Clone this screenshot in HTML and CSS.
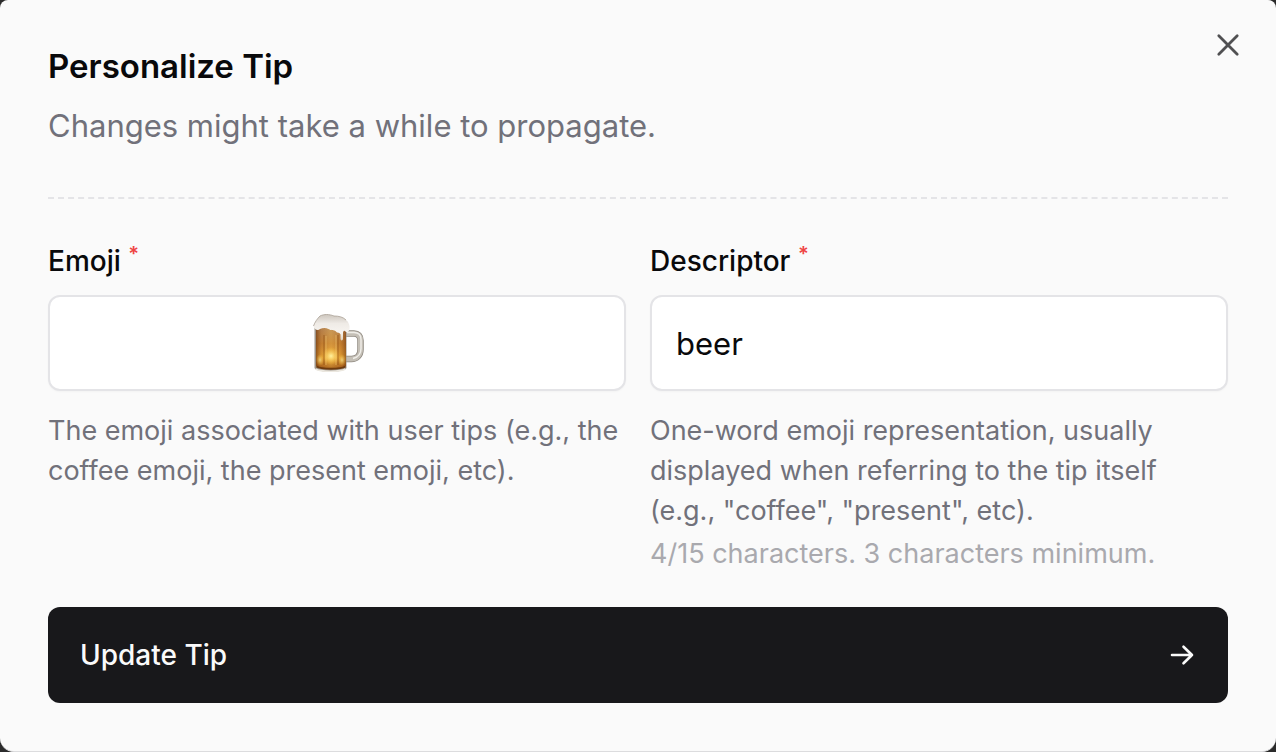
FILE: index.html
```html
<!DOCTYPE html>
<html lang="en">

<head>
    <meta charset="UTF-8">
    <meta name="viewport" content="width=device-width, initial-scale=1">
    <title>Personalize Tip</title>
    <link rel="stylesheet" href="styles.css">
</head>

<body>
    <main class="dialog" role="dialog" aria-labelledby="dialogTitle">
        <button type="button" class="close" aria-label="Close">
            <svg width="32" height="32" viewBox="0 0 32 32" fill="none" stroke="currentColor" stroke-width="2.8" stroke-linecap="round">
                <path d="M6.8 6.8 25.2 25.2M25.2 6.8 6.8 25.2"/>
            </svg>
        </button>

        <header class="dialog-header">
            <h1 id="dialogTitle">Personalize Tip</h1>
            <p>Changes might take a while to propagate.</p>
        </header>

        <form class="tip-form">
            <div class="fields">
                <div class="form-group">
                    <label for="emoji">Emoji <span class="required">*</span></label>
                    <button type="button" id="emoji" class="control emoji-picker">
                        <!-- Beer mug -->
                        <svg width="60" height="64" viewBox="0 0 60 64" aria-hidden="true">
                            <defs>
                                <linearGradient id="beer" x1="0" y1="0" x2="0" y2="1">
                                    <stop offset="0" stop-color="#b98a5c"/>
                                    <stop offset="0.4" stop-color="#c98435"/>
                                    <stop offset="0.75" stop-color="#eda93a"/>
                                    <stop offset="1" stop-color="#a45c1c"/>
                                </linearGradient>
                                <linearGradient id="side" x1="0" y1="0" x2="1" y2="0">
                                    <stop offset="0" stop-color="#6b3610" stop-opacity="0.7"/>
                                    <stop offset="0.18" stop-color="#9c5716" stop-opacity="0.2"/>
                                    <stop offset="0.5" stop-color="#ffd558" stop-opacity="0.2"/>
                                    <stop offset="0.82" stop-color="#9c5716" stop-opacity="0.2"/>
                                    <stop offset="1" stop-color="#6b3610" stop-opacity="0.6"/>
                                </linearGradient>
                                <radialGradient id="glow">
                                    <stop offset="0" stop-color="#fff1a0"/>
                                    <stop offset="1" stop-color="#ffc83e" stop-opacity="0"/>
                                </radialGradient>
                                <linearGradient id="foam" x1="0" y1="0" x2="0" y2="1">
                                    <stop offset="0" stop-color="#cdc6be"/>
                                    <stop offset="0.35" stop-color="#efebe6"/>
                                    <stop offset="0.7" stop-color="#f7f4f0"/>
                                    <stop offset="1" stop-color="#ddd0bf"/>
                                </linearGradient>
                            </defs>
                            <path d="M39 22.5h8c4 0 6.5 2.500 6.500 7v9c0 6-4 9.500-9 9.500h-6" fill="none" stroke="#8f8980" stroke-width="6.500"/>
                            <path d="M39 22.5h8c4 0 6.500 2.500 6.500 7v9c0 6-4 9.500-9 9.500h-6" fill="none" stroke="#c4bfb6" stroke-width="5"/>
                            <path d="M40 21.500h7c4.500 0 7 2.500 7 7v9c0 6-4 9-8 10" fill="none" stroke="#efede8" stroke-width="1.500"/>
                            <path d="M7.500 16h32v41c-2 5-30 5-32 0z" fill="#9d958b"/>
                            <path d="M9 16h30v39c-3 3-27 3-30 0z" fill="url(#beer)"/>
                            <path d="M9 16h30v39c-3 3-27 3-30 0z" fill="url(#side)"/>
                            <ellipse cx="24" cy="45" rx="9" ry="9" fill="url(#glow)"/>
                            <ellipse cx="13" cy="49" rx="4" ry="6" fill="url(#glow)" opacity="0.7"/>
                            <ellipse cx="35" cy="49" rx="4" ry="6" fill="url(#glow)" opacity="0.7"/>
                            <path d="M17 24v30M31 24v30" stroke="#86480f" stroke-width="1.2" opacity="0.5"/>
                            <path d="M19 25v29M29 24v30" stroke="#ffe08a" stroke-width="0.8" opacity="0.5"/>
                            <path d="M9.500 55.500c5 3 24 3 29 0" fill="none" stroke="#6e3b0e" stroke-width="2"/>
                            <path d="M8.500 58c5 3 25 3 30 0" fill="none" stroke="#ece8e0" stroke-width="1.500"/>
                            <path d="M6.500 15C8 11 10 8 13 5c4-2 9-2 14 0 5 0 9 1 12 4 3 2 4 6 3.500 9-.5 3-3 4-4 2.500-1-1.500-2-1-2.500 1v6c0 2.500-2.500 2.500-2.500 0v-4c-1-2.500-3-1-4-2.500-3-3-5-1-8-3-3-1.500-6-1-8.500 0-2 2-6 .5-6.500-3z" fill="url(#foam)"/>
                            <path d="M6.500 15C8 11 10 8 13 5c4-2 9-2 14 0 5 0 9 1 12 4" fill="none" stroke="#a99f94" stroke-width="0.8"/>
                        </svg>
                    </button>
                    <p class="hint">The emoji associated with user tips (e.g., the coffee emoji, the present emoji, etc).</p>
                </div>

                <div class="form-group">
                    <label for="descriptor">Descriptor <span class="required">*</span></label>
                    <input type="text" id="descriptor" name="descriptor" class="control" value="beer" minlength="3" maxlength="15" required>
                    <p class="hint">One-word emoji representation, usually displayed when referring to the tip itself (e.g., "coffee", "present", etc).</p>
                    <p class="counter">4/15 characters. 3 characters minimum.</p>
                </div>
            </div>

            <button type="submit" class="submit">
                <span>Update Tip</span>
                <svg width="28" height="28" viewBox="0 0 28 28" fill="none" stroke="currentColor" stroke-width="2.6" stroke-linecap="round" stroke-linejoin="round">
                    <path d="M4 14h20M15.500 5.700l8.500 8.300-8.500 8.300"/>
                </svg>
            </button>
        </form>
    </main>
</body>

</html>
```
FILE: styles.css
```css
* {
    box-sizing: border-box;
}

body {
    margin: 0;
    background-color: #2b2b2b;
    color: #09090b;
    font-family: Inter, "Liberation Sans", sans-serif;
    font-size: 28px;
    line-height: 40px;
}

h1,
p {
    margin: 0;
}

button,
input {
    font: inherit;
    color: inherit;
}

button {
    cursor: pointer;
}

svg {
    display: block;
}

.dialog {
    position: relative;
    padding: 48px;
    background-color: #fafafa;
    border-bottom: 1px solid #dcdcde;
    border-radius: 8px 8px 14px 14px;
}

.close {
    position: absolute;
    top: 29px;
    right: 32px;
    padding: 0;
    border: none;
    background: none;
    color: #505052;
}

.dialog-header {
    padding-bottom: 47px;
    border-bottom: 2px dashed #e4e4e7;
}

.dialog-header h1 {
    margin-bottom: 18px;
    font-size: 33px;
    font-weight: 600;
    line-height: 36px;
}

.dialog-header p {
    color: #71717a;
    font-size: 31px;
    line-height: 48px;
}

.tip-form {
    padding-top: 42px;
}

.fields {
    display: grid;
    grid-template-columns: 1fr 1fr;
    gap: 24px;
}

.form-group label {
    display: block;
    margin-bottom: 14px;
    font-weight: 500;
}

.required {
    color: #ef4444;
    font-size: 20px;
    font-weight: 600;
    line-height: 20px;
    vertical-align: 10px;
}

.control {
    display: block;
    width: 100%;
    height: 96px;
    padding: 0 24px;
    border: 2px solid #e4e4e7;
    border-radius: 12px;
    background-color: #fff;
    font-size: 31px;
    box-shadow: 0 1px 2px rgba(0, 0, 0, 0.03);
}

.emoji-picker {
    display: flex;
    align-items: center;
    justify-content: center;
}

.hint,
.counter {
    font-size: 27px;
}

.hint {
    margin-top: 20px;
    color: #71717a;
}

.counter {
    margin-top: 3px;
    color: #a9a9ae;
}

.submit {
    display: flex;
    align-items: center;
    justify-content: space-between;
    width: 100%;
    height: 96px;
    margin-top: 33px;
    padding: 0 32px;
    border: none;
    border-radius: 12px;
    background-color: #18181b;
    color: #fafafa;
    font-weight: 500;
}
```
